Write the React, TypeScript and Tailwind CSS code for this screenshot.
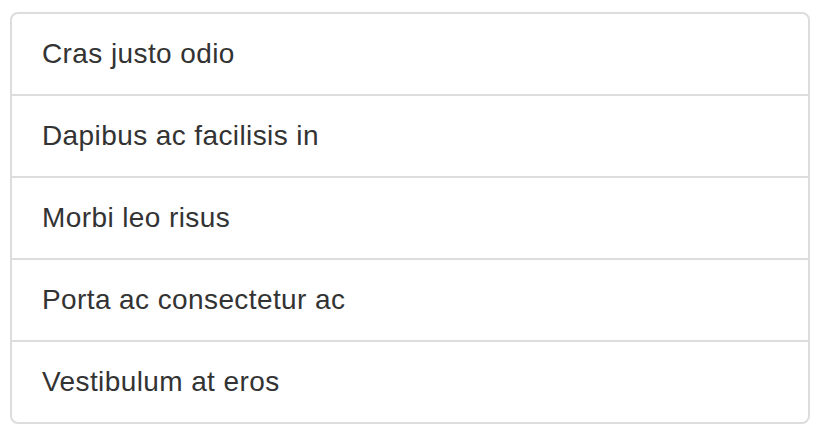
import React from 'react';

const items = [
  'Cras justo odio',
  'Dapibus ac facilisis in',
  'Morbi leo risus',
  'Porta ac consectetur ac',
  'Vestibulum at eros',
];

const App: React.FC = () => {
  return (
    <div className="pl-[10px] pt-[12px] bg-white min-h-screen" style={{ fontFamily: '"Liberation Sans", Arial, sans-serif' }}>
      <ul className="w-[800px] border-2 border-[#dddddd] rounded-[8px] bg-white">
        {items.map((item, index) => (
          <li
            key={index}
            className={`px-[30px] py-[20px] text-[28px] leading-[40px] tracking-[0.4px] text-[#333333] ${
              index > 0 ? 'border-t-2 border-[#dddddd]' : ''
            }`}
          >
            {item}
          </li>
        ))}
      </ul>
    </div>
  );
};

export default App;
